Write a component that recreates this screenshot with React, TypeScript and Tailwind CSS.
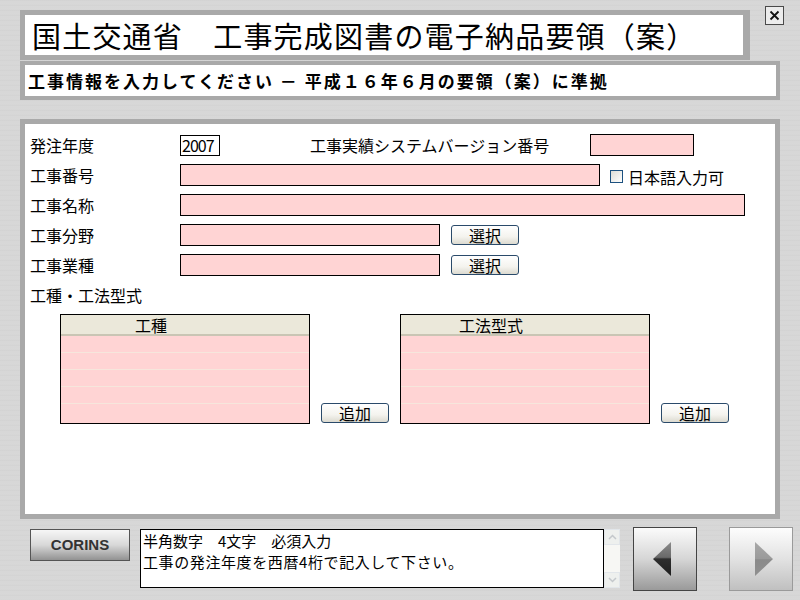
import React from 'react';

const PINK = 'bg-[#ffd4d4]';

const Field = ({ w }: { w: string }) => (
  <div className={`${w} h-[22px] border border-black ${PINK}`} />
);

const SelectButton = ({ label }: { label: string }) => (
  <button className="w-[68px] h-[20px] rounded-[3px] border border-[#2a4a6a] bg-[linear-gradient(#ffffff,#f4f3ee_60%,#dcdad0)] text-[16px] leading-none text-black flex items-center justify-center">
    {label}
  </button>
);

const ListBox = ({ title }: { title: string }) => (
  <div className="w-[250px] h-[110px] border border-black bg-[#ffd4d4] flex flex-col">
    <div className="h-[21px] bg-[#ebe8da] border-b-2 border-[#c9c5b4] flex items-center">
      <div className="w-[180px] text-center text-[16px] leading-none">{title}</div>
    </div>
    {[0, 1, 2, 3].map((i) => (
      <div key={i} className="h-[17px] border-b border-[#f6e6dc]" />
    ))}
  </div>
);

const App: React.FC = () => {
  return (
    <div className="w-[800px] h-[600px] overflow-hidden bg-[#d6d6d6] bg-[repeating-linear-gradient(0deg,#d3d3d3_0px,#dadada_1px,#d5d5d5_2px,#d9d9d9_3px,#d2d2d2_5px)] pt-[10px] pl-[20px] text-black font-['Noto_Sans_CJK_JP','Liberation_Sans',sans-serif]">
      {/* Title */}
      <div className="flex items-start">
        <div className="w-[730px] h-[50px] border-[#a9a9a9] border-t-[5px] border-l-[5px] border-b-[5px] border-r-[7px] bg-white flex items-center pl-[7px]">
          <span className="text-[29px] leading-none tracking-[1.2px]">国土交通省　工事完成図書の電子納品要領（案）</span>
        </div>
        <button className="ml-[15px] -mt-[4px] w-[19px] h-[19px] border border-[#4a4a4a] bg-[#ececec] flex items-center justify-center">
          <svg width="11" height="11" viewBox="0 0 11 11">
            <path d="M1.5 1.5 L9.5 9.5 M9.5 1.5 L1.5 9.5" stroke="#111" strokeWidth="1.8" />
          </svg>
        </button>
      </div>

      {/* Subtitle */}
      <div className="mt-[1px] w-[760px] h-[39px] border-[#a9a9a9] border-t-[4px] border-b-[4px] border-l-[5px] border-r-[4px] bg-white flex items-center pl-[3px]">
        <span className="text-[17px] leading-none font-bold tracking-[2px]">工事情報を入力してください － 平成１６年６月の要領（案）に準拠</span>
      </div>

      {/* Main form */}
      <div className="mt-[19px] w-[760px] h-[400px] border-[5px] border-[#a9a9a9] bg-white pt-[10px] pl-[5px] text-[16px] leading-none">
        <div className="flex items-center h-[22px]">
          <div className="w-[150px]">発注年度</div>
          <div className="w-[40px] h-[21px] border border-black bg-white flex items-center pl-[1px] text-[16px] tracking-[-1px]">2007</div>
          <div className="ml-[90px] w-[280px]">工事実績システムバージョン番号</div>
          <div className="w-[104px] h-[22px] border border-black bg-[#ffd4d4]" />
        </div>

        <div className="flex items-center h-[22px] mt-[8px]">
          <div className="w-[150px]">工事番号</div>
          <Field w="w-[420px]" />
          <div className="ml-[10px] mt-[2px] w-[13px] h-[13px] border border-[#1c5180] bg-[linear-gradient(135deg,#dcdcd6,#ffffff)]" />
          <div className="ml-[5px] mt-[4px]">日本語入力可</div>
        </div>

        <div className="flex items-center h-[22px] mt-[8px]">
          <div className="w-[150px]">工事名称</div>
          <Field w="w-[565px]" />
        </div>

        <div className="flex items-center h-[22px] mt-[8px]">
          <div className="w-[150px]">工事分野</div>
          <Field w="w-[260px]" />
          <div className="ml-[11px]">
            <SelectButton label="選択" />
          </div>
        </div>

        <div className="flex items-center h-[22px] mt-[8px]">
          <div className="w-[150px]">工事業種</div>
          <Field w="w-[260px]" />
          <div className="ml-[11px]">
            <SelectButton label="選択" />
          </div>
        </div>

        <div className="flex items-center h-[22px] mt-[8px]">
          <div>工種・工法型式</div>
        </div>

        <div className="flex items-end mt-[8px] ml-[30px]">
          <ListBox title="工種" />
          <div className="ml-[11px] mb-[1px]">
            <SelectButton label="追加" />
          </div>
          <div className="ml-[11px]">
            <ListBox title="工法型式" />
          </div>
          <div className="ml-[11px] mb-[1px]">
            <SelectButton label="追加" />
          </div>
        </div>
      </div>

      {/* Footer */}
      <div className="flex items-start mt-[10px]">
        <button className="ml-[10px] w-[100px] h-[32px] border border-[#555] bg-[linear-gradient(#f6f6f6,#d8d8d8_50%,#929292)] flex items-center justify-center text-[15px] font-bold text-[#333] font-['Liberation_Sans_Narrow','Liberation_Sans',sans-serif]">
          CORINS
        </button>

        <div className="ml-[10px] w-[464px] h-[59px] border border-black bg-white pl-[2px] text-[15px] leading-[21px]">
          <div>半角数字　4文字　必須入力</div>
          <div className="tracking-[0.6px]">工事の発注年度を西暦4桁で記入して下さい。</div>
        </div>

        <div className="w-[16px] h-[59px] bg-[#f7f7f4] flex flex-col justify-between">
          <div className="h-[16px] border border-[#e2e6ea] bg-[#eef0ee] flex items-center justify-center">
            <svg width="9" height="6" viewBox="0 0 9 6">
              <path d="M1 5 L4.5 1.5 L8 5" fill="none" stroke="#c4c8cc" strokeWidth="1.5" />
            </svg>
          </div>
          <div className="h-[16px] border border-[#e2e6ea] bg-[#eef0ee] flex items-center justify-center">
            <svg width="9" height="6" viewBox="0 0 9 6">
              <path d="M1 1 L4.5 4.5 L8 1" fill="none" stroke="#c4c8cc" strokeWidth="1.5" />
            </svg>
          </div>
        </div>

        <button className="ml-[13px] -mt-[2px] w-[64px] h-[64px] border border-[#444] bg-[linear-gradient(#fbfbfb,#d6d6d6_50%,#9a9a9a)]">
          <svg width="62" height="62" viewBox="0 0 62 62">
            <defs>
              <linearGradient id="lt" x1="0" y1="0" x2="0" y2="1">
                <stop offset="0" stopColor="#8a8a8a" />
                <stop offset="0.45" stopColor="#6a6a6a" />
                <stop offset="0.5" stopColor="#2e2e2e" />
                <stop offset="1" stopColor="#1e1e1e" />
              </linearGradient>
            </defs>
            <polygon points="19,31 37,14 37,48" fill="url(#lt)" />
          </svg>
        </button>

        <button className="ml-[32px] -mt-[2px] w-[64px] h-[64px] border border-[#9a9a9a] bg-[linear-gradient(#fdfdfd,#e2e2e2_50%,#c0c0c0)]">
          <svg width="62" height="62" viewBox="0 0 62 62">
            <defs>
              <linearGradient id="rt" x1="0" y1="0" x2="0" y2="1">
                <stop offset="0" stopColor="#a8a8a8" />
                <stop offset="0.5" stopColor="#9a9a9a" />
                <stop offset="0.52" stopColor="#8a8a8a" />
                <stop offset="1" stopColor="#909090" />
              </linearGradient>
            </defs>
            <polygon points="25,14 43,31 25,48" fill="url(#rt)" />
          </svg>
        </button>
      </div>
    </div>
  );
};

export default App;
